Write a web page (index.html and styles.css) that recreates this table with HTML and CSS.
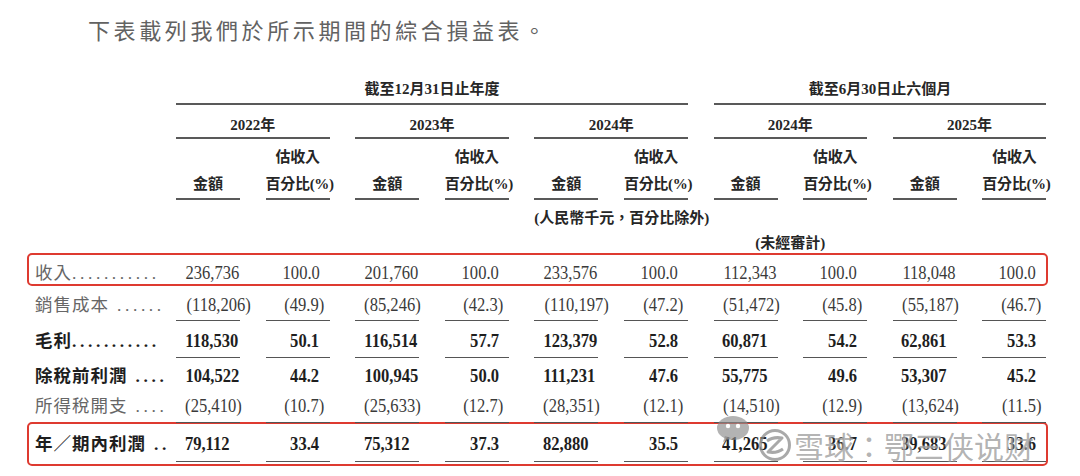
FILE: index.html
```html
<!DOCTYPE html>
<html lang="zh-Hant">
<head>
<meta charset="utf-8">
<title>綜合損益表</title>
<link rel="stylesheet" href="styles.css">
</head>
<body>
<p class="intro">下表載列我們於所示期間的綜合損益表。</p>

<div class="table">
  <div class="grid hdr hdr-a">
    <div class="span-l">截至12月31日止年度</div>
    <div class="span-r">截至6月30日止六個月</div>
  </div>
  <div class="grid hdr hdr-b">
    <div class="blank"></div>
    <div class="yr">2022年</div>
    <div class="yr">2023年</div>
    <div class="yr">2024年</div>
    <div class="yr">2024年</div>
    <div class="yr">2025年</div>
  </div>
  <div class="grid hdr hdr-c">
    <div class="blank"></div>
    <div class="amt">金額</div><div class="pct">估收入<br>百分比(%)</div>
    <div class="amt">金額</div><div class="pct">估收入<br>百分比(%)</div>
    <div class="amt">金額</div><div class="pct">估收入<br>百分比(%)</div>
    <div class="amt">金額</div><div class="pct">估收入<br>百分比(%)</div>
    <div class="amt">金額</div><div class="pct">估收入<br>百分比(%)</div>
  </div>
  <div class="grid hdr hdr-d">
    <div class="unit">(人民幣千元，百分比除外)</div>
  </div>
  <div class="grid hdr hdr-e">
    <div class="audit">(未經審計)</div>
  </div>

  <div class="grid row hl r-rev">
    <div class="lbl">收入<span class="dots">...........</span></div>
    <div class="n"><span>236,736</span></div><div class="n"><span>100.0</span></div>
    <div class="n"><span>201,760</span></div><div class="n"><span>100.0</span></div>
    <div class="n"><span>233,576</span></div><div class="n"><span>100.0</span></div>
    <div class="n"><span>112,343</span></div><div class="n"><span>100.0</span></div>
    <div class="n"><span>118,048</span></div><div class="n"><span>100.0</span></div>
  </div>
  <div class="grid row ul r-cost">
    <div class="lbl">銷售成本<span class="dots"> ......</span></div>
    <div class="n"><span>(118,206<b class="cp">)</b></span></div><div class="n"><span>(49.9<b class="cp">)</b></span></div>
    <div class="n"><span>(85,246<b class="cp">)</b></span></div><div class="n"><span>(42.3<b class="cp">)</b></span></div>
    <div class="n"><span>(110,197<b class="cp">)</b></span></div><div class="n"><span>(47.2<b class="cp">)</b></span></div>
    <div class="n"><span>(51,472<b class="cp">)</b></span></div><div class="n"><span>(45.8<b class="cp">)</b></span></div>
    <div class="n"><span>(55,187<b class="cp">)</b></span></div><div class="n"><span>(46.7<b class="cp">)</b></span></div>
  </div>
  <div class="grid row ul bold r-gross">
    <div class="lbl">毛利<span class="dots">...........</span></div>
    <div class="n"><span>118,530</span></div><div class="n"><span>50.1</span></div>
    <div class="n"><span>116,514</span></div><div class="n"><span>57.7</span></div>
    <div class="n"><span>123,379</span></div><div class="n"><span>52.8</span></div>
    <div class="n"><span>60,871</span></div><div class="n"><span>54.2</span></div>
    <div class="n"><span>62,861</span></div><div class="n"><span>53.3</span></div>
  </div>
  <div class="grid row bold r-pbt">
    <div class="lbl">除稅前利潤<span class="dots"> ....</span></div>
    <div class="n"><span>104,522</span></div><div class="n"><span>44.2</span></div>
    <div class="n"><span>100,945</span></div><div class="n"><span>50.0</span></div>
    <div class="n"><span>111,231</span></div><div class="n"><span>47.6</span></div>
    <div class="n"><span>55,775</span></div><div class="n"><span>49.6</span></div>
    <div class="n"><span>53,307</span></div><div class="n"><span>45.2</span></div>
  </div>
  <div class="grid row ul r-tax">
    <div class="lbl">所得稅開支<span class="dots"> ....</span></div>
    <div class="n"><span>(25,410<b class="cp">)</b></span></div><div class="n"><span>(10.7<b class="cp">)</b></span></div>
    <div class="n"><span>(25,633<b class="cp">)</b></span></div><div class="n"><span>(12.7<b class="cp">)</b></span></div>
    <div class="n"><span>(28,351<b class="cp">)</b></span></div><div class="n"><span>(12.1<b class="cp">)</b></span></div>
    <div class="n"><span>(14,510<b class="cp">)</b></span></div><div class="n"><span>(12.9<b class="cp">)</b></span></div>
    <div class="n"><span>(13,624<b class="cp">)</b></span></div><div class="n"><span>(11.5<b class="cp">)</b></span></div>
  </div>
  <div class="grid row hl ul bold r-net">
    <div class="lbl">年／期內利潤<span class="dots"> ..</span></div>
    <div class="n"><span>79,112</span></div><div class="n"><span>33.4</span></div>
    <div class="n"><span>75,312</span></div><div class="n"><span>37.3</span></div>
    <div class="n"><span>82,880</span></div><div class="n"><span>35.5</span></div>
    <div class="n"><span>41,265</span></div><div class="n"><span>36.7</span></div>
    <div class="n"><span>39,683</span></div><div class="n"><span>33.6</span></div>
  </div>
</div>

<div class="wm" aria-hidden="true">
  <svg class="wm-chat" width="34" height="28" viewBox="0 0 34 28">
    <ellipse cx="17" cy="13" rx="16" ry="12" fill="#8a8a8a" fill-opacity=".65"/>
    <path d="M9 21 L7 27 L15 23 Z" fill="#8a8a8a" fill-opacity=".65"/>
    <circle cx="12" cy="11" r="2.2" fill="#fff"/>
    <circle cx="22" cy="11" r="2.2" fill="#fff"/>
  </svg>
  <svg class="wm-ball" width="34" height="34" viewBox="0 0 34 34">
    <circle cx="17" cy="17" r="14.5" fill="none" stroke="#8c8c8c" stroke-opacity=".75" stroke-width="3"/>
    <path d="M9 13 C13 10 18 9 24 10 L10 24 C16 25 21 24 25 21" fill="none" stroke="#8c8c8c" stroke-opacity=".75" stroke-width="3" stroke-linejoin="round"/>
  </svg>
  <span class="wm-text">雪球：鄂三侠说财</span>
</div>
</body>
</html>
```

FILE: styles.css
```css
* {
  box-sizing: border-box;
  margin: 0;
  padding: 0;
}

body {
  position: relative;
  width: 1080px;
  height: 476px;
  overflow: hidden;
  background: #fff;
  color: #3a3a3a;
  font-family: "Liberation Serif", "Noto Sans CJK TC", serif;
}

.intro {
  padding: 14px 0 0 88px;
  font-family: "Noto Sans CJK TC", sans-serif;
  font-size: 22px;
  line-height: 30px;
  letter-spacing: 3.6px;
  color: #626262;
}

.table {
  margin: 36px 0 0 27px;
  width: 1021.4px;
}

.grid {
  display: grid;
  grid-template-columns: 121.4px repeat(10, 64px);
  column-gap: 25.6px;
}

/* ---------- header ---------- */
.hdr {
  padding: 0 2px;
  font-size: 15px;
  font-weight: 700;
  color: #262626;
  text-align: center;
}

.hdr-a > div {
  line-height: 18px;
  padding-bottom: 5px;
  border-bottom: 2px solid #595959;
}
.span-l { grid-column: 2 / 8; }
.span-r { grid-column: 8 / 12; }

.hdr-b > div {
  line-height: 18px;
  padding-top: 11px;
  padding-bottom: 3px;
}
.hdr-b .yr {
  grid-column: span 2;
  border-bottom: 2px solid #595959;
}

.hdr-c > div {
  line-height: 27px;
  padding-top: 5px;
}
.hdr-c .amt,
.hdr-c .pct {
  border-bottom: 2px solid #595959;
}
.hdr-c .amt {
  display: flex;
  align-items: flex-end;
  justify-content: center;
}
.hdr-c .pct {
  white-space: nowrap;
  letter-spacing: -0.3px;
}

.hdr-d > div {
  line-height: 20px;
  padding-top: 8px;
  white-space: nowrap;
}
.unit { grid-column: 6 / 8; }

.hdr-e > div {
  line-height: 20px;
  padding-top: 5px;
}
.audit { grid-column: 8 / 10; }

/* ---------- body rows ---------- */
.row {
  border: 2px solid transparent;
  border-radius: 5px;
  line-height: 20px;
}
.row.hl {
  border-color: #de3a30;
}

.lbl {
  padding-left: 6px;
  white-space: nowrap;
  font-size: 17.5px;
  letter-spacing: 1px;
  color: #666;
}
.dots {
  letter-spacing: 3.6px;
}

.n {
  text-align: right;
  padding-right: 10px;
  white-space: nowrap;
}
.n > span {
  display: inline-block;
  font-size: 19.5px;
  transform: scaleX(0.85);
  transform-origin: 100% 50%;
}
.cp {
  font-weight: inherit;
  margin-right: -0.3em;
}

.row.ul > div {
  border-bottom: 1.5px solid transparent;
}
.row.ul > .n {
  border-bottom-color: #555;
}

.bold .lbl,
.bold .n {
  font-weight: 700;
  color: #1e1e1e;
}

.r-rev > div { padding-top: 8px; }
.r-cost > div { padding-top: 7px; padding-bottom: 4px; }
.r-gross > div { padding-top: 5.5px; padding-bottom: 5px; }
.r-pbt > div { padding-top: 4.5px; }
.r-tax > div { padding-top: 5px; padding-bottom: 5px; }
.r-net {
  margin-top: -3.5px;
  padding-bottom: 2.5px;
}
.r-net > div { padding-top: 10px; padding-bottom: 6px; }

/* ---------- watermark overlay ---------- */
.wm {
  position: absolute;
  left: 716px;
  top: 413px;
  display: flex;
  align-items: flex-start;
  gap: 14px;
  pointer-events: none;
}
.wm-chat {
  margin-top: 2px;
}
.wm-ball {
  margin-top: 15px;
  margin-left: -6px;
}
.wm-text {
  margin-left: -12px;
  margin-top: 13px;
  font-family: "Noto Sans CJK SC", sans-serif;
  font-size: 30px;
  line-height: 38px;
  color: rgba(130, 130, 130, 0.62);
  text-shadow: 0 0 2px rgba(255, 255, 255, 0.8);
  white-space: nowrap;
}
```
